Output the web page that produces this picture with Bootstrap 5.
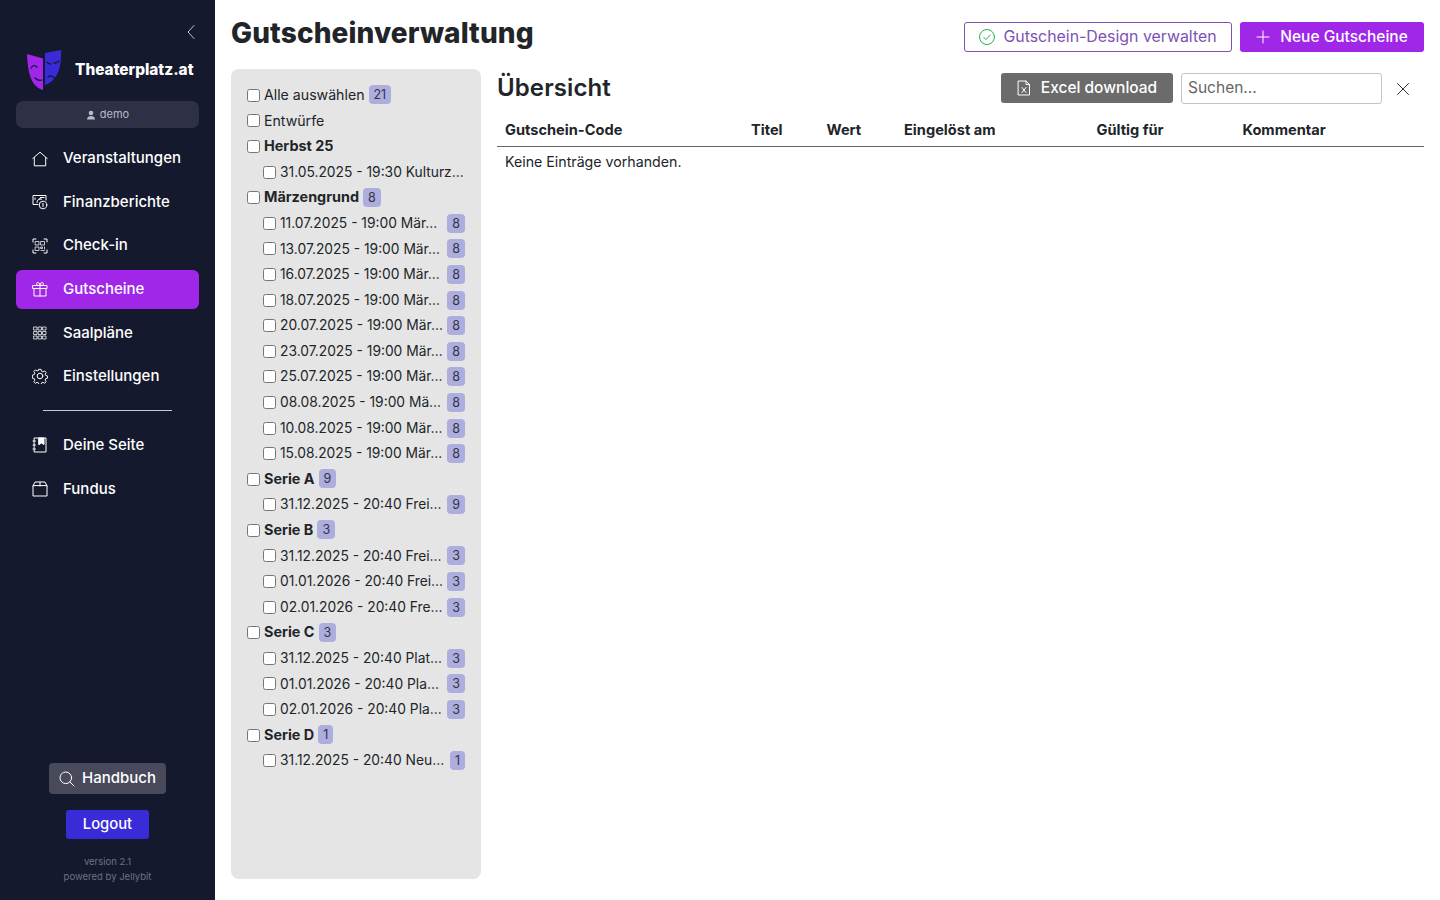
<!DOCTYPE html>
<html lang="de">
<head>
<meta charset="utf-8">
<title>Gutscheinverwaltung</title>
<link href="https://cdn.jsdelivr.net/npm/bootstrap@5.3.0/dist/css/bootstrap.min.css" rel="stylesheet">
<style>
html,body{height:100%;overflow:hidden}
body{font-family:Inter,"Liberation Sans",sans-serif;font-size:14.5px;color:#212529;background:#fff}
svg{display:block;flex:none;fill:none;stroke:currentColor;stroke-width:1;stroke-linecap:round;stroke-linejoin:round}
.shell{height:900px}
.side{width:215px;flex:none;background:#15192e;color:#fff;padding:0 16px 16px}
.collapse-btn{height:24px;margin-top:20px;color:#c5c6cf}
.brand{height:46px;margin-top:3px;padding-left:10px;gap:13px}
.brand-name{font-size:15.4px;font-weight:800}
.user-pill{height:27px;margin-top:8px;background:#2e3146;border-radius:7px;color:#b9bac4;font-size:11px;gap:4px}
.side-nav{margin-top:11px;gap:4.6px}
.side-link{height:39px;padding-left:16px;gap:15px;color:#fff;border-radius:6px;text-decoration:none;font-size:15px;font-weight:500}
.side-link.on{background:#a026e8}
.side-rule{border-top:1px solid #c9cad3;margin:14px 27px 15px;opacity:1}
.thin{stroke-width:.75}
.manual{background:#484a5c;color:#fff;height:31px;width:117px;border-radius:4px;font-size:15px;font-weight:500;gap:7px;padding:0}
.logout{background:#3a2bd8;color:#fff;height:29px;width:83px;border-radius:3px;font-size:14.8px;font-weight:500;padding:0;margin-top:15.5px}
.fine{font-size:9.5px;line-height:15px;color:#70727f;margin-top:15.5px}
.main-area{padding:0 16px 21px;min-width:0}
.top-head{height:69px}
.page-title{font-size:28px;font-weight:800;margin:0;padding-top:16px;line-height:34px;letter-spacing:.12px}
.top-btns{gap:8px;padding-top:22px}
.btn-soft{height:30px;border:1px solid #7d52b5;color:#7d52b5;background:#fff;border-radius:3px;width:268px;font-size:15.9px;padding:0;gap:8px}
.btn-soft svg{color:#2bb04a}
.btn-vio{height:30px;background:#a026e8;color:#fff;border:0;border-radius:3px;width:184px;font-size:15.5px;font-weight:500;padding:0;gap:10px}
.filter{width:250px;flex:none;background:#e5e5e5;border-radius:8px;padding:13px 16px}
.frow{height:25.6px;gap:4px;font-size:14.15px;white-space:nowrap}
.frow input{margin:1px 0 0;width:13px;height:13px;flex:none}
.frow.sub{padding-left:16px;font-size:13.8px;gap:3px}
.frow.sub input{margin-right:1px}
.frow.sub .fname,.frow.sub .cnt{margin-top:1px}
.fname{overflow:hidden;text-overflow:ellipsis;min-width:0}
.fbold{font-weight:700;font-size:14.4px}
.cnt{background:#adadde;color:#33334a;border-radius:4px;font-size:12.5px;line-height:19px;height:19px;padding:0 5px;flex:none}
.frow.sub .cnt{margin-left:auto}
.results{min-width:0;padding-left:16px}
.res-head{height:38px;gap:8px}
.res-title{font-size:24px;font-weight:600;margin:0;letter-spacing:.1px}
.btn-xl{background:#6b6b6b;color:#fff;height:30px;width:172px;border-radius:3px;font-size:15.5px;font-weight:500;padding:0;gap:10px;border:0}
.search-in{width:201px;height:31px;border:1px solid #c4c4c4;border-radius:3px;padding:0 6px 1px;font-size:15.5px;color:#555}
.search-in::placeholder{color:#666;opacity:1}
.clear-x{width:34px;color:#333;padding-top:2px;margin-left:-4px;margin-right:4px}
.vtable{table-layout:fixed;width:927px;margin:0;font-size:14.2px;margin-top:8px}
.vtable th{font-weight:700;padding:2px 8px 0;height:31px;vertical-align:middle;border-bottom:1px solid #666;color:#212529;font-size:14.6px}
.vtable td{padding:0 8px;height:31px;border:0;vertical-align:middle}
.c1{width:246px}.c2{width:75.5px}.c3{width:77.5px}.c4{width:192.5px}.c5{width:146px}.c6{width:auto}
</style>
</head>
<body>
<div class="d-flex shell">
<aside class="side d-flex flex-column">
  <div class="collapse-btn d-flex justify-content-end align-items-center">
    <svg width="16" height="16" viewBox="0 0 16 16"><path d="M11 1.500 5 8l6 6.500"/></svg>
  </div>
  <div class="brand d-flex align-items-center">
    <svg width="36" height="40" viewBox="0 0 36 40">
      <path fill="#a026e8" stroke="none" d="M1 4 17 8.500V40C8 37 2 30 1 4Z"/>
      <path fill="#3a2bd8" stroke="none" d="M19 3 35 0C35.500 15 33 30 19 35Z"/>
      <path stroke="#15192e" stroke-width="1.300" d="M5 18c2-3 4-3 6-1M9 28c2 2 4 3 7 2M21 12c1 2 3 2 4 2M28 13c2 0 4-1 5-2M22 27c2-2 5-1 7 2"/>
    </svg>
    <span class="brand-name">Theaterplatz.at</span>
  </div>
  <div class="user-pill d-flex align-items-center justify-content-center">
    <svg width="10" height="10" viewBox="0 0 10 10" style="fill:currentColor;stroke:none"><circle cx="5" cy="3" r="2.300"/><path d="M1 9.500C1 7 3 6 5 6s4 1 4 3.500Z"/></svg>
    <span>demo</span>
  </div>
  <nav class="side-nav d-flex flex-column">
    <a class="side-link d-flex align-items-center" href="#"><svg width="16" height="16" viewBox="0 0 16 16"><path d="M.8 7.500 8 1.200l7.200 6.300M2.300 6.500v8.300h11.400V6.500"/></svg><span>Veranstaltungen</span></a>
    <a class="side-link d-flex align-items-center" href="#"><svg width="16" height="16" viewBox="0 0 16 16"><path d="M6 10.500H1V1.500h13v4.500M3 4v1.500M12 3.500H8.500M5 8.500c0-2 1.200-3.500 3-3.500M8.500 3.500l-1 1.500 2 .2"/><circle cx="11" cy="11" r="3.800"/><path d="M11 9.300v3.400"/></svg><span>Finanzberichte</span></a>
    <a class="side-link d-flex align-items-center" href="#"><svg width="16" height="16" viewBox="0 0 16 16"><path d="M1 4V1h3M12 1h3v3M15 12v3h-3M4 15H1v-3"/><path class="thin" d="M3.500 3.500h3.500v3.500H3.500zM9 3.500h3.500v3.500H9zM3.500 9H7v3.500H3.500zM9 9h1.500v1.500H9zM12.500 9v2M9 12.500h3.500"/></svg><span>Check-in</span></a>
    <a class="side-link on d-flex align-items-center" href="#"><svg width="16" height="16" viewBox="0 0 16 16"><path d="M1 4.500h14v3H1zM2 7.500V15h12V7.500M8 4.500V15M8 4.500C6 4.500 4.500 4 4.500 2.700 4.500 1.500 6 1 7 2c.6.600 1 1.500 1 2.500 0-1 .4-1.900 1-2.500 1-1 2.500-.5 2.500.7C11.500 4 10 4.500 8 4.500Z"/></svg><span>Gutscheine</span></a>
    <a class="side-link d-flex align-items-center" href="#"><svg width="16" height="16" viewBox="0 0 16 16"><path class="thin" d="M2 2h3v3H2zM6.500 2h3v3h-3zM11 2h3v3h-3zM2 6.500h3v3H2zM6.500 6.500h3v3h-3zM11 6.500h3v3h-3zM2 11h3v3H2zM6.500 11h3v3h-3zM11 11h3v3h-3z"/></svg><span>Saalpläne</span></a>
    <a class="side-link d-flex align-items-center" href="#"><svg width="16" height="16" viewBox="0 0 16 16"><circle cx="8" cy="8" r="2.800"/><path d="M6.800 1h2.400l.4 2 1.500.7 1.800-1.100 1.600 1.700-1.100 1.700.6 1.500 2 .5v2.300l-2 .5-.6 1.500 1.100 1.700-1.600 1.700-1.800-1.100-1.500.7-.4 1.900H6.800l-.4-1.900-1.500-.7-1.800 1.100-1.600-1.700 1.100-1.700-.6-1.500-2-.5V7l2-.5.6-1.500-1.100-1.700 1.600-1.700 1.800 1.100 1.500-.7Z" transform="translate(.4 .4) scale(.95)"/></svg><span>Einstellungen</span></a>
  </nav>
  <hr class="side-rule">
  <nav class="d-flex flex-column side-nav mt-0">
    <a class="side-link d-flex align-items-center" href="#"><svg width="16" height="16" viewBox="0 0 16 16"><path d="M2.500 1h11.500v14H2.500zM1 4h2.500M1 8h2.500M1 12h2.500"/><path d="M7 1h5v6.500L9.500 6 7 7.500Z" fill="currentColor"/></svg><span>Deine Seite</span></a>
    <a class="side-link d-flex align-items-center" href="#"><svg width="16" height="16" viewBox="0 0 16 16"><path d="M1 5v10h14V5zM1 5l2-4h10l2 4M8 1v4"/></svg><span>Fundus</span></a>
  </nav>
  <div class="mt-auto d-flex flex-column align-items-center">
    <button class="manual btn d-flex align-items-center justify-content-center" type="button"><svg width="16" height="16" viewBox="0 0 16 16"><circle cx="6.800" cy="6.800" r="5.800"/><path d="m11 11 4 4"/></svg>Handbuch</button>
    <button class="logout btn" type="button">Logout</button>
    <div class="fine text-center">version 2.1<br>powered by Jellybit</div>
  </div>
</aside>
<main class="main-area flex-grow-1 d-flex flex-column">
  <header class="top-head d-flex justify-content-between align-items-start">
    <h1 class="page-title">Gutscheinverwaltung</h1>
    <div class="top-btns d-flex">
      <button class="btn btn-soft d-flex align-items-center justify-content-center" type="button"><svg width="16" height="16" viewBox="0 0 16 16"><circle cx="8" cy="8" r="7.500"/><path d="m4.800 8.300 2.200 2.200 4.300-4.500"/></svg>Gutschein-Design verwalten</button>
      <button class="btn btn-vio d-flex align-items-center justify-content-center" type="button"><svg width="14" height="14" viewBox="0 0 14 14"><path d="M7 1v12M1 7h12"/></svg>Neue Gutscheine</button>
    </div>
  </header>
  <div class="d-flex flex-grow-1">
    <section class="filter">
      <label class="frow d-flex align-items-center"><input type="checkbox"><span class="fname">Alle auswählen</span><span class="cnt">21</span></label>
      <label class="frow d-flex align-items-center"><input type="checkbox"><span class="fname">Entwürfe</span></label>
      <label class="frow d-flex align-items-center"><input type="checkbox"><span class="fname fbold">Herbst 25</span></label>
      <label class="frow sub d-flex align-items-center"><input type="checkbox"><span class="fname">31.05.2025 - 19:30 Kulturz…</span></label>
      <label class="frow d-flex align-items-center"><input type="checkbox"><span class="fname fbold">Märzengrund</span><span class="cnt">8</span></label>
      <label class="frow sub d-flex align-items-center"><input type="checkbox"><span class="fname">11.07.2025 - 19:00 Mär…</span><span class="cnt">8</span></label>
      <label class="frow sub d-flex align-items-center"><input type="checkbox"><span class="fname">13.07.2025 - 19:00 Mär…</span><span class="cnt">8</span></label>
      <label class="frow sub d-flex align-items-center"><input type="checkbox"><span class="fname">16.07.2025 - 19:00 Mär…</span><span class="cnt">8</span></label>
      <label class="frow sub d-flex align-items-center"><input type="checkbox"><span class="fname">18.07.2025 - 19:00 Mär…</span><span class="cnt">8</span></label>
      <label class="frow sub d-flex align-items-center"><input type="checkbox"><span class="fname">20.07.2025 - 19:00 Mär…</span><span class="cnt">8</span></label>
      <label class="frow sub d-flex align-items-center"><input type="checkbox"><span class="fname">23.07.2025 - 19:00 Mär…</span><span class="cnt">8</span></label>
      <label class="frow sub d-flex align-items-center"><input type="checkbox"><span class="fname">25.07.2025 - 19:00 Mär…</span><span class="cnt">8</span></label>
      <label class="frow sub d-flex align-items-center"><input type="checkbox"><span class="fname">08.08.2025 - 19:00 Mä…</span><span class="cnt">8</span></label>
      <label class="frow sub d-flex align-items-center"><input type="checkbox"><span class="fname">10.08.2025 - 19:00 Mär…</span><span class="cnt">8</span></label>
      <label class="frow sub d-flex align-items-center"><input type="checkbox"><span class="fname">15.08.2025 - 19:00 Mär…</span><span class="cnt">8</span></label>
      <label class="frow d-flex align-items-center"><input type="checkbox"><span class="fname fbold">Serie A</span><span class="cnt">9</span></label>
      <label class="frow sub d-flex align-items-center"><input type="checkbox"><span class="fname">31.12.2025 - 20:40 Frei…</span><span class="cnt">9</span></label>
      <label class="frow d-flex align-items-center"><input type="checkbox"><span class="fname fbold">Serie B</span><span class="cnt">3</span></label>
      <label class="frow sub d-flex align-items-center"><input type="checkbox"><span class="fname">31.12.2025 - 20:40 Frei…</span><span class="cnt">3</span></label>
      <label class="frow sub d-flex align-items-center"><input type="checkbox"><span class="fname">01.01.2026 - 20:40 Frei…</span><span class="cnt">3</span></label>
      <label class="frow sub d-flex align-items-center"><input type="checkbox"><span class="fname">02.01.2026 - 20:40 Fre…</span><span class="cnt">3</span></label>
      <label class="frow d-flex align-items-center"><input type="checkbox"><span class="fname fbold">Serie C</span><span class="cnt">3</span></label>
      <label class="frow sub d-flex align-items-center"><input type="checkbox"><span class="fname">31.12.2025 - 20:40 Plat…</span><span class="cnt">3</span></label>
      <label class="frow sub d-flex align-items-center"><input type="checkbox"><span class="fname">01.01.2026 - 20:40 Pla…</span><span class="cnt">3</span></label>
      <label class="frow sub d-flex align-items-center"><input type="checkbox"><span class="fname">02.01.2026 - 20:40 Pla…</span><span class="cnt">3</span></label>
      <label class="frow d-flex align-items-center"><input type="checkbox"><span class="fname fbold">Serie D</span><span class="cnt">1</span></label>
      <label class="frow sub d-flex align-items-center"><input type="checkbox"><span class="fname">31.12.2025 - 20:40 Neu…</span><span class="cnt">1</span></label>
    </section>
    <section class="results flex-grow-1">
      <div class="res-head d-flex align-items-center justify-content-between">
        <h2 class="res-title">Übersicht</h2>
        <div class="d-flex align-items-center gap-2">
          <button class="btn btn-xl d-flex align-items-center justify-content-center" type="button"><svg width="14" height="16" viewBox="0 0 14 16"><path d="M1.500 1h7.500l3.500 3.500V15h-11zM9 1v3.500h3.500M5 7.500l4 5M9 7.500l-4 5"/></svg>Excel download</button>
          <input class="search-in" type="text" placeholder="Suchen...">
          <div class="clear-x d-flex justify-content-center"><svg width="14" height="14" viewBox="0 0 14 14"><path d="m1.500 1.500 11 11M12.500 1.500l-11 11"/></svg></div>
        </div>
      </div>
      <table class="table vtable">
        <colgroup><col class="c1"><col class="c2"><col class="c3"><col class="c4"><col class="c5"><col class="c6"></colgroup>
        <thead><tr><th>Gutschein-Code</th><th>Titel</th><th>Wert</th><th>Eingelöst am</th><th>Gültig für</th><th>Kommentar</th></tr></thead>
        <tbody><tr><td colspan="6">Keine Einträge vorhanden.</td></tr></tbody>
      </table>
    </section>
  </div>
</main>
</div>
<script src="https://cdn.jsdelivr.net/npm/bootstrap@5.3.0/dist/js/bootstrap.bundle.min.js"></script>
</body>
</html>
